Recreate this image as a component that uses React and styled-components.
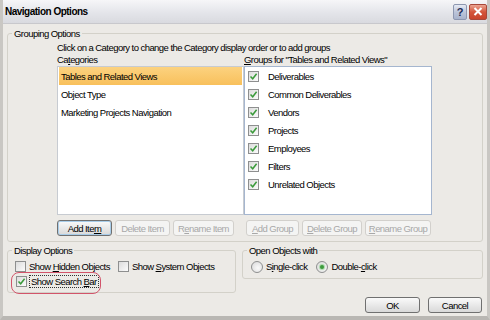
import React from "react";
import styled, { createGlobalStyle } from "styled-components";

const Global = createGlobalStyle`
  html, body { margin: 0; padding: 0; background: #d4d0c8; }
  body {
    font-family: "Liberation Sans", Arial, sans-serif;
    font-size: 9.5px;
    letter-spacing: -0.55px;
    color: #000;
  }
`;

const Window = styled.div`
  width: 490px;
  height: 320px;
  box-sizing: border-box;
  display: flex;
  flex-direction: column;
  background: #eceae6;
  border-left: 3px solid #c9c7c3;
  border-right: 3px solid #c9c7c3;
  border-bottom: 4px solid #b9b7b3;
  overflow: hidden;
`;

const TitleBar = styled.div`
  height: 24px;
  flex: none;
  box-sizing: border-box;
  display: flex;
  align-items: center;
  padding: 0 3px 0 3px;
  margin: 0 -3px;
  background: linear-gradient(#f6f6f8, #e4e5ea 55%, #d9dadf);
  border-bottom: 1px solid #c8c8cc;
`;

const Title = styled.div`
  flex: 1;
  font-weight: bold;
  font-size: 10px;
  letter-spacing: -0.5px;
  padding-left: 2px;
`;

const CaptionButton = styled.div`
  width: ${(p) => (p.$close ? 18 : 14)}px;
  height: 16px;
  margin-left: 2px;
  border-radius: 2px;
  display: flex;
  align-items: center;
  justify-content: center;
  box-sizing: border-box;
  border: 1px solid ${(p) => (p.$close ? "#a8483a" : "#8d97b0")};
  background: ${(p) =>
    p.$close
      ? "linear-gradient(#eba592, #d4553b 50%, #c8442c)"
      : "linear-gradient(#e6eaf4, #bcc5da 50%, #a8b3cc)"};
  color: #1b2a55;
  font-weight: bold;
  font-size: 11px;
  letter-spacing: 0;
`;

const Body = styled.div`
  flex: 1;
  display: flex;
  flex-direction: column;
  padding: 3px 4px 0 4px;
`;

const Group = styled.fieldset`
  margin: 0;
  padding: 0 0 ${(p) => p.$pb || 0}px 0;
  border: 1px solid #d3d1c9;
  border-radius: 3px;
  min-width: 0;
  box-sizing: border-box;
  width: ${(p) => (p.$w ? `${p.$w}px` : "auto")};
  flex: ${(p) => (p.$grow ? "1" : "none")};
`;

const Legend = styled.legend`
  padding: 0 2px;
  margin-left: 4px;
  line-height: 13px;
`;

const GroupingBody = styled.div`
  padding: 1px 50px 5px 49px;
  display: flex;
  flex-direction: column;
`;

const Hint = styled.div`
  line-height: 13px;
  height: 13px;
  white-space: nowrap;
`;

const Columns = styled.div`
  display: grid;
  grid-template-columns: 187px 188px;
`;

const Column = styled.div`
  display: flex;
  flex-direction: column;
`;

const ColLabel = styled.div`
  line-height: 12px;
  height: 12px;
  white-space: nowrap;
`;

const ListBox = styled.div`
  height: 149px;
  box-sizing: border-box;
  background: #fff;
  border: 1px solid ${(p) => (p.$accent ? "#a5b6cf" : "#c7cbd1")};
  padding: 0 1px;
`;

const ListRow = styled.div`
  height: 18px;
  display: flex;
  align-items: center;
  white-space: nowrap;
  padding-left: 2px;
  background: ${(p) => (p.$selected ? "linear-gradient(#fcd27f, #f8c05c)" : "transparent")};
`;

const ButtonRow = styled.div`
  display: flex;
  gap: 3px;
  margin-top: 5px;
  padding-left: ${(p) => p.$indent || 0}px;
`;

const Button = styled.div`
  height: 16px;
  box-sizing: border-box;
  width: ${(p) => p.$w}px;
  display: flex;
  align-items: center;
  justify-content: center;
  white-space: nowrap;
  border-radius: 3px;
  border: 1px solid ${(p) => (p.$disabled ? "#d2d0cc" : "#707070")};
  background: ${(p) =>
    p.$disabled ? "#f4f4f3" : "linear-gradient(#fafafa, #e9e9e9 50%, #d9d9d9)"};
  color: ${(p) => (p.$disabled ? "#a8a8a8" : "#000")};
  box-shadow: ${(p) => (p.$default ? "inset 0 0 0 1px #a9cde9" : "none")};
`;

const Check = styled.span`
  width: 11px;
  height: 11px;
  flex: none;
  box-sizing: border-box;
  border: 1px solid #8e8f8f;
  background: linear-gradient(135deg, #dcdcdc, #fbfbfb);
  display: inline-flex;
  align-items: center;
  justify-content: center;
  margin-right: ${(p) => p.$gap || 3}px;
`;

const Radio = styled.span`
  width: 12px;
  height: 12px;
  flex: none;
  box-sizing: border-box;
  border-radius: 50%;
  border: 1px solid #8e8f8f;
  background: radial-gradient(circle at 60% 60%, #fafafa, #d8d8d8);
  display: inline-flex;
  align-items: center;
  justify-content: center;
  margin-right: 3px;
`;

const Dot = styled.span`
  width: 4px;
  height: 4px;
  border-radius: 50%;
  background: #3d9a3d;
  box-shadow: 0 0 1px 1px #a6d8a6;
`;

const BottomRow = styled.div`
  display: flex;
  gap: 6px;
  margin-top: 2px;
  align-items: flex-start;
`;

const OptionsLine = styled.div`
  display: flex;
  align-items: center;
  height: 15px;
  padding-left: ${(p) => p.$indent || 8}px;
  gap: ${(p) => p.$gap || 0}px;
  margin-top: ${(p) => p.$mt || 0}px;
`;

const Option = styled.label`
  display: flex;
  align-items: center;
  white-space: nowrap;
`;

const Focus = styled.span`
  outline: 1px dotted #333;
  padding: 0 1px;
  line-height: 11px;
`;

const Annotated = styled.div`
  position: relative;
`;

const Ring = styled.div`
  position: absolute;
  left: -5px;
  top: -4px;
  width: 90px;
  height: 22px;
  box-sizing: border-box;
  border: 1px solid #d2546a;
  border-radius: 8px;
  pointer-events: none;
`;

const Footer = styled.div`
  display: flex;
  justify-content: flex-end;
  gap: 8px;
  margin-top: 4px;
  padding-right: 1px;
`;

const U = styled.span`
  text-decoration: underline;
`;

const CheckMark = () => (
  <svg width="9" height="9" viewBox="0 0 9 9">
    <path d="M1.5 4.5 L3.7 6.8 L7.6 1.8" fill="none" stroke="#3a9a3a" strokeWidth="1.5" />
  </svg>
);

const groups = [
  "Deliverables",
  "Common Deliverables",
  "Vendors",
  "Projects",
  "Employees",
  "Filters",
  "Unrelated Objects",
];

export default function App() {
  return (
    <Window>
      <Global />
      <TitleBar>
        <Title>Navigation Options</Title>
        <CaptionButton>?</CaptionButton>
        <CaptionButton $close>
          <svg width="10" height="9" viewBox="0 0 10 9">
            <path d="M1.5 1 L8.5 8 M8.5 1 L1.5 8" stroke="#fff" strokeWidth="2" />
          </svg>
        </CaptionButton>
      </TitleBar>
      <Body>
        <Group>
          <Legend>Grouping Options</Legend>
          <GroupingBody>
            <Hint>Click on a Category to change the Category display order or to add groups</Hint>
            <Columns>
              <Column>
                <ColLabel>
                  Ca<U>t</U>egories
                </ColLabel>
                <ListBox>
                  <ListRow $selected>Tables and Related Views</ListRow>
                  <ListRow>Object Type</ListRow>
                  <ListRow>Marketing Projects Navigation</ListRow>
                </ListBox>
                <ButtonRow>
                  <Button $w={55} $default>
                    <span>
                      Add Ite<U>m</U>
                    </span>
                  </Button>
                  <Button $w={55} $disabled>
                    Delete Item
                  </Button>
                  <Button $w={61} $disabled>
                    <span>
                      R<U>e</U>name Item
                    </span>
                  </Button>
                </ButtonRow>
              </Column>
              <Column>
                <ColLabel>
                  <U>G</U>roups for "Tables and Related Views"
                </ColLabel>
                <ListBox $accent>
                  {groups.map((g) => (
                    <ListRow key={g}>
                      <Check $gap={9}>
                        <CheckMark />
                      </Check>
                      {g}
                    </ListRow>
                  ))}
                </ListBox>
                <ButtonRow $indent={2}>
                  <Button $w={53} $disabled>
                    <span>
                      <U>A</U>dd Group
                    </span>
                  </Button>
                  <Button $w={60} $disabled>
                    <span>
                      <U>D</U>elete Group
                    </span>
                  </Button>
                  <Button $w={66} $disabled>
                    <span>
                      <U>R</U>ename Group
                    </span>
                  </Button>
                </ButtonRow>
              </Column>
            </Columns>
          </GroupingBody>
        </Group>
        <BottomRow>
          <Group $w={229} $pb={3}>
            <Legend>Display Options</Legend>
            <OptionsLine $gap={8} $indent={7} $mt={2}>
              <Option>
                <Check />
                <span>
                  Show <U>H</U>idden Objects
                </span>
              </Option>
              <Option>
                <Check />
                <span>
                  Show <U>S</U>ystem Objects
                </span>
              </Option>
            </OptionsLine>
            <OptionsLine>
              <Annotated>
                <Option>
                  <Check>
                    <CheckMark />
                  </Check>
                  <Focus>
                    Show Search <U>B</U>ar
                  </Focus>
                </Option>
                <Ring />
              </Annotated>
            </OptionsLine>
          </Group>
          <Group $grow $pb={4}>
            <Legend>Open Objects with</Legend>
            <OptionsLine $gap={9} $mt={2}>
              <Option>
                <Radio />
                <span>
                  S<U>i</U>ngle-click
                </span>
              </Option>
              <Option>
                <Radio>
                  <Dot />
                </Radio>
                <span>
                  Double-<U>c</U>lick
                </span>
              </Option>
            </OptionsLine>
          </Group>
        </BottomRow>
        <Footer>
          <Button $w={55}>OK</Button>
          <Button $w={54}>Cancel</Button>
        </Footer>
      </Body>
    </Window>
  );
}
